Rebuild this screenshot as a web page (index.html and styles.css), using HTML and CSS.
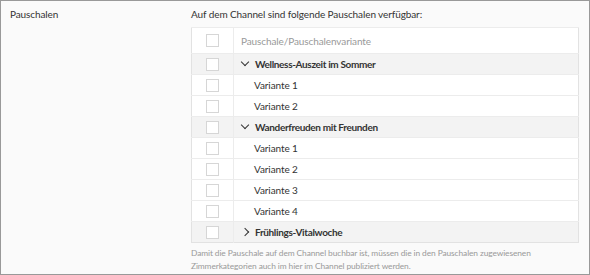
FILE: index.html
```html
<!DOCTYPE html>
<html lang="de">
<head>
    <meta charset="utf-8">
    <title>Pauschalen</title>
    <link rel="stylesheet" href="styles.css">
</head>
<body>
    <div class="panel">
        <div class="label">Pauschalen</div>
        <div class="content">
            <div class="intro">Auf dem Channel sind folgende Pauschalen verfügbar:</div>
            <table class="packages">
                <tr class="head">
                    <td class="check"><span class="box"></span></td>
                    <td>Pauschale/Pauschalenvariante</td>
                </tr>
                <tr class="group">
                    <td class="check"><span class="box"></span></td>
                    <td><span class="chev down"></span>Wellness-Auszeit im Sommer</td>
                </tr>
                <tr class="variant">
                    <td class="check"><span class="box"></span></td>
                    <td>Variante 1</td>
                </tr>
                <tr class="variant">
                    <td class="check"><span class="box"></span></td>
                    <td>Variante 2</td>
                </tr>
                <tr class="group">
                    <td class="check"><span class="box"></span></td>
                    <td><span class="chev down"></span>Wanderfreuden mit Freunden</td>
                </tr>
                <tr class="variant">
                    <td class="check"><span class="box"></span></td>
                    <td>Variante 1</td>
                </tr>
                <tr class="variant">
                    <td class="check"><span class="box"></span></td>
                    <td>Variante 2</td>
                </tr>
                <tr class="variant">
                    <td class="check"><span class="box"></span></td>
                    <td>Variante 3</td>
                </tr>
                <tr class="variant">
                    <td class="check"><span class="box"></span></td>
                    <td>Variante 4</td>
                </tr>
                <tr class="group">
                    <td class="check"><span class="box"></span></td>
                    <td><span class="chev right"></span>Frühlings-Vitalwoche</td>
                </tr>
            </table>
            <p class="hint">Damit die Pauschale auf dem Channel buchbar ist, müssen die in den Pauschalen zugewiesenen Zimmerkategorien auch im hier im Channel publiziert werden.</p>
        </div>
    </div>
</body>
</html>
```

FILE: styles.css
```css
body {
    margin: 0;
    font-family: Lato, "Open Sans", sans-serif;
    font-size: 10px;
    letter-spacing: -0.1px;
    color: #333;
}

.panel {
    display: flex;
    height: 273px;
    border: 1px solid #999;
    background-color: #fafafa;
}

.label {
    width: 181px;
    padding: 7px 0 0 9px;
}

.content {
    width: 388px;
    padding-top: 7px;
}

.intro {
    height: 19px;
}

.packages {
    width: 100%;
    border-collapse: collapse;
    background-color: #fff;
    border: 1px solid #e2e2e2;
}

.packages td {
    height: 20px;
    padding: 0;
    border-top: 1px solid #ececec;
}

.packages .head td {
    height: 25px;
    color: #999;
    padding-left: 7px;
}

.packages td.check {
    width: 41px;
    text-align: center;
    border-right: 1px solid #ececec;
}

.box {
    display: inline-block;
    width: 11px;
    height: 11px;
    border: 1px solid #d6d6d6;
    background-color: #fff;
    vertical-align: middle;
}

.group {
    background-color: #f3f3f3;
    font-weight: bold;
    letter-spacing: -0.35px;
}

.group td {
    padding-left: 8px;
}

.variant td {
    padding-left: 20px;
}

.packages tr td.check {
    padding-left: 0;
}

.chev {
    display: inline-block;
    width: 5px;
    height: 5px;
    border-right: 1.3px solid #333;
    border-bottom: 1.3px solid #333;
    margin-right: 7px;
    vertical-align: middle;
}

.chev.down {
    transform: translateY(-3px) rotate(45deg);
}

.chev.right {
    transform: translateY(-1px) rotate(-45deg);
}

.hint {
    margin: 4px 0 0;
    color: #999;
    font-size: 8.4px;
    letter-spacing: -0.1px;
    line-height: 13px;
}
```
